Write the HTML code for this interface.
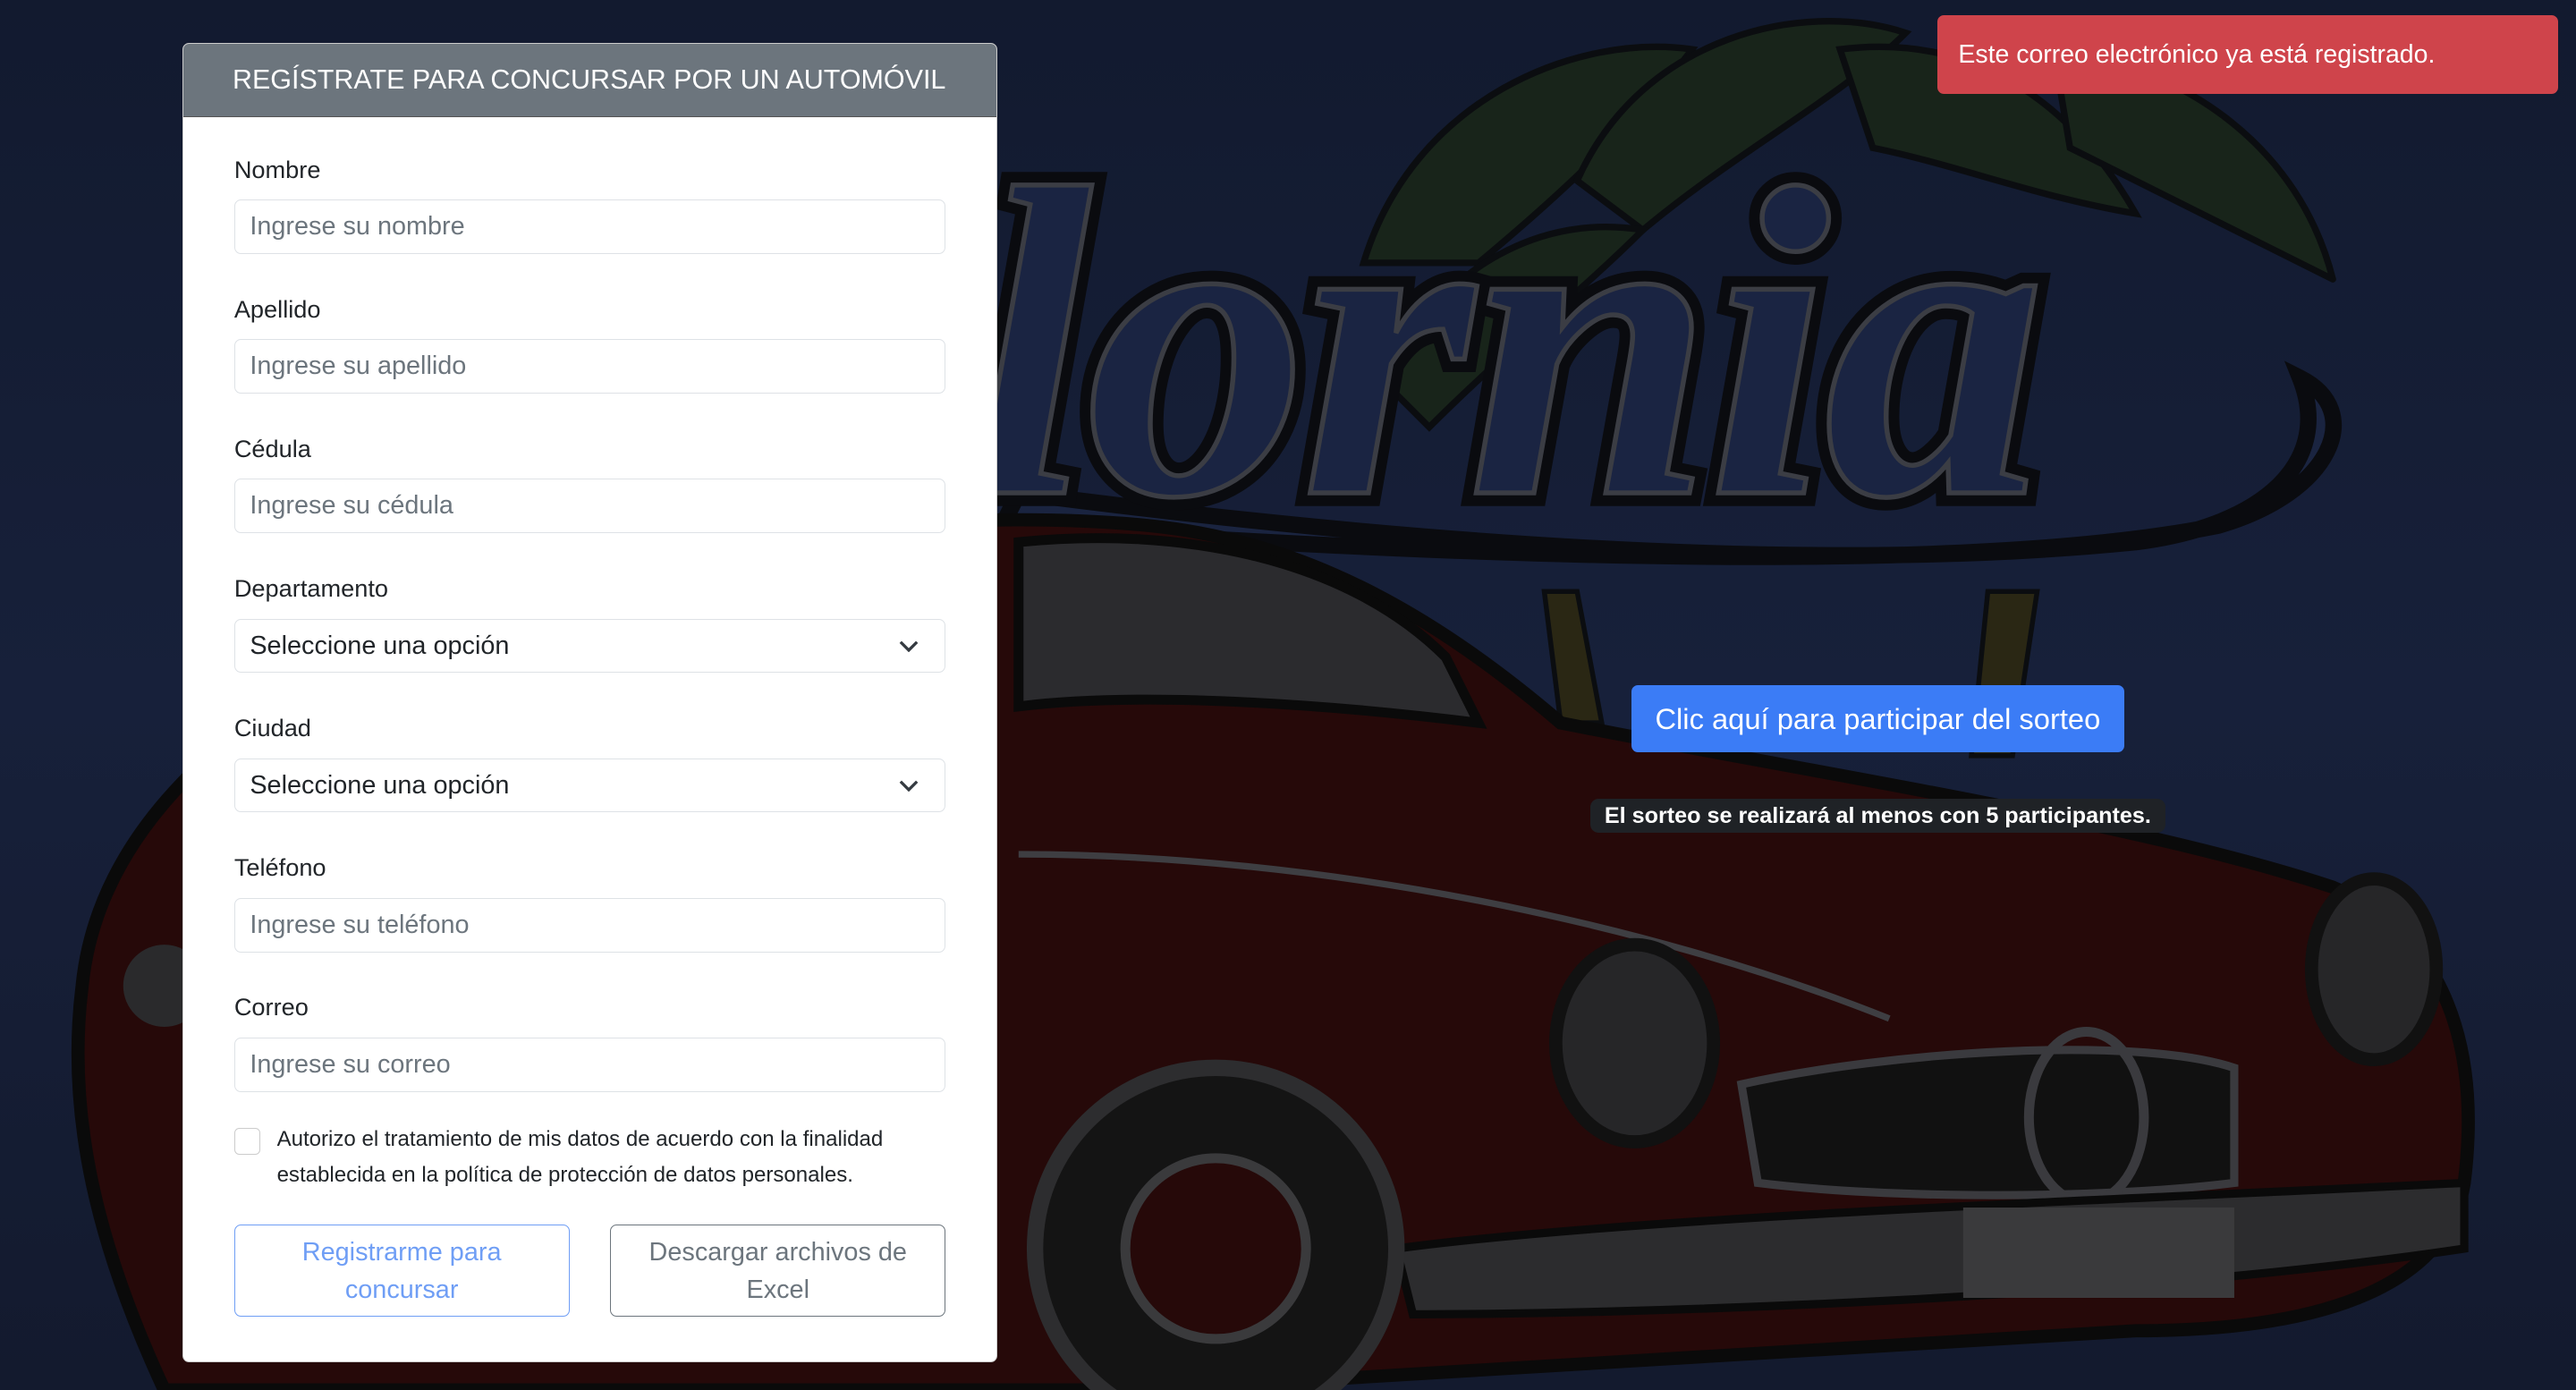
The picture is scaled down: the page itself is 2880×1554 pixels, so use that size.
<!DOCTYPE html>
<html><head><meta charset="utf-8">
<style>
html,body{margin:0;padding:0;}
body{width:2880px;height:1554px;overflow:hidden;background:#131a2c;font-family:"Liberation Sans",sans-serif;}
#w{position:absolute;left:0;top:0;width:1568px;height:846px;zoom:1.83673;overflow:hidden;background:linear-gradient(180deg,#121a2f 0%,#17203a 50%,#131a2e 100%);}
.abs{position:absolute}
.card{left:111px;top:26px;width:495px;height:802px;background:#fff;border:1px solid #ccc;border-radius:4px;overflow:hidden}
.hd{height:44px;background:#6c757d;color:#fff;font-size:16.6px;line-height:44px;padding-left:30px;border-bottom:1px solid #555;white-space:nowrap}
.lb{position:absolute;left:31px;font-size:14.8px;color:#212529}
.in{position:absolute;left:31px;width:423px;height:32px;border:1px solid #dee2e6;border-radius:4px;font-size:15.7px;color:#6c757d;line-height:32px;padding-left:9px;box-sizing:content-box}
.sel{color:#212529}
.sel svg{position:absolute;right:16px;top:12px}
.cb{position:absolute;left:31px;top:660px;width:15px;height:15px;border:1px solid #ccc;border-radius:3px}
.ct{position:absolute;left:57px;top:656px;font-size:13.1px;line-height:22px;color:#212529;width:410px}
.bt{position:absolute;top:719px;height:56px;border-radius:4px;font-size:15.7px;line-height:23px;text-align:center;display:flex;align-items:center;justify-content:center;box-sizing:border-box}
</style></head><body>
<div id="w">
<svg class="abs" style="left:0;top:0" width="1568" height="846" viewBox="0 0 1568 846">
 <g fill="#18241a" stroke="#0b0d10" stroke-width="4">
  <path d="M830 160 C860 60 960 20 1030 30 C1000 70 960 110 900 160 Z"/>
  <path d="M960 110 C1000 20 1100 0 1160 20 C1120 60 1060 90 1000 140 Z"/>
  <path d="M1120 30 C1200 20 1260 60 1300 130 C1240 120 1190 100 1140 90 Z"/>
  <path d="M1250 30 C1330 40 1400 90 1420 170 C1360 140 1300 110 1260 90 Z"/>
  <path d="M840 230 C880 160 940 130 1000 140 C960 180 920 210 870 260 Z"/>
 </g>
 <g fill="#2a2714" stroke="#0b0d10" stroke-width="3">
  <path d="M940 360 L960 360 L975 440 L950 440 Z"/>
  <path d="M1210 360 L1240 360 L1225 460 L1200 460 Z"/>
 </g>
 <path d="M610 320 C900 340 1200 350 1350 320 C1420 300 1440 250 1400 230 C1420 280 1380 320 1300 330 C1100 350 850 330 620 300 Z" fill="#1a2440" stroke="#0a0b0f" stroke-width="10"/>
 <text x="590" y="300" font-family="Liberation Serif,serif" font-style="italic" font-weight="bold" font-size="270" fill="#1a2442" stroke="#0a0b0f" stroke-width="16" paint-order="stroke" letter-spacing="-4">lornia</text>
 <text x="590" y="300" font-family="Liberation Serif,serif" font-style="italic" font-weight="bold" font-size="270" fill="none" stroke="#3b3d44" stroke-width="3" letter-spacing="-4">lornia</text>
 <path d="M50 600 C60 500 150 420 300 360 C450 320 600 310 700 320 C800 330 880 380 950 440 C1100 470 1300 500 1420 540 C1490 570 1510 640 1500 720 C1490 780 1420 810 1300 810 L700 846 L100 846 C60 760 40 680 50 600 Z" fill="#260909" stroke="#0a0a0a" stroke-width="8"/>
 <path d="M620 330 C720 320 820 340 880 400 L900 440 C820 430 700 420 620 430 Z" fill="#2b2b2e" stroke="#0a0a0a" stroke-width="6"/>
 <path d="M620 520 C800 520 1000 560 1150 620" fill="none" stroke="#3e3e42" stroke-width="4"/>
 <ellipse cx="995" cy="635" rx="48" ry="60" fill="#262628" stroke="#111" stroke-width="8"/>
 <ellipse cx="1445" cy="590" rx="38" ry="55" fill="#262628" stroke="#111" stroke-width="8"/>
 <path d="M1060 660 C1150 640 1300 630 1360 650 L1360 720 C1280 730 1150 730 1070 720 Z" fill="#111" stroke="#3a3a3e" stroke-width="5"/>
 <ellipse cx="1270" cy="680" rx="35" ry="52" fill="none" stroke="#3a3a3e" stroke-width="6"/>
 <path d="M850 760 C1000 740 1300 730 1500 720 L1500 760 C1300 790 1000 800 860 800 Z" fill="#2c2c2e" stroke="#0a0a0a" stroke-width="5"/>
 <rect x="1195" y="735" width="165" height="55" fill="#3a3a3c"/>
 <circle cx="740" cy="760" r="110" fill="#141414" stroke="#2d2d2f" stroke-width="10"/>
 <circle cx="740" cy="760" r="55" fill="#260909" stroke="#3a3a3c" stroke-width="6"/>
 <circle cx="100" cy="600" r="25" fill="#2a2a2c"/>
</svg>

<div class="abs card">
 <div class="hd">REGÍSTRATE PARA CONCURSAR POR UN AUTOMÓVIL</div>
 <div class="lb" style="top:68px">Nombre</div>
 <div class="in" style="top:95px">Ingrese su nombre</div>
 <div class="lb" style="top:153px">Apellido</div>
 <div class="in" style="top:180px">Ingrese su apellido</div>
 <div class="lb" style="top:238px">Cédula</div>
 <div class="in" style="top:265px">Ingrese su cédula</div>
 <div class="lb" style="top:323px">Departamento</div>
 <div class="in sel" style="top:350px">Seleccione una opción<svg width="12" height="8" viewBox="0 0 12 8"><path d="M1 1.5 L6 6.5 L11 1.5" fill="none" stroke="#343a40" stroke-width="1.8"/></svg></div>
 <div class="lb" style="top:408px">Ciudad</div>
 <div class="in sel" style="top:435px">Seleccione una opción<svg width="12" height="8" viewBox="0 0 12 8"><path d="M1 1.5 L6 6.5 L11 1.5" fill="none" stroke="#343a40" stroke-width="1.8"/></svg></div>
 <div class="lb" style="top:493px">Teléfono</div>
 <div class="in" style="top:520px">Ingrese su teléfono</div>
 <div class="lb" style="top:578px">Correo</div>
 <div class="in" style="top:605px">Ingrese su correo</div>
 <div class="cb"></div>
 <div class="ct">Autorizo el tratamiento de mis datos de acuerdo con la finalidad establecida en la política de protección de datos personales.</div>
 <div class="bt" style="left:31px;width:204px;border:1px solid #6f9ef5;color:#6f9ef5">Registrarme para<br>concursar</div>
 <div class="bt" style="left:260px;width:204px;border:1px solid #6c757d;color:#6c757d">Descargar archivos de<br>Excel</div>
</div>

<div class="abs" style="left:1179px;top:9px;width:378px;height:48px;background:#cf444b;border-radius:4px;color:#fff;font-size:15.5px;line-height:48px;padding-left:13px;box-sizing:border-box">Este correo electrónico ya está registrado.</div>

<div class="abs" style="left:993px;top:417px;width:300px;height:41px;background:#3b7cf6;border-radius:4px;color:#fff;font-size:17.8px;line-height:41px;text-align:center">Clic aquí para participar del sorteo</div>

<div class="abs" style="left:968px;top:486px;width:350px;height:21px;background:#1f2226;border-radius:5px;color:#fff;font-size:13.7px;font-weight:bold;line-height:21px;text-align:center;white-space:nowrap">El sorteo se realizará al menos con 5 participantes.</div>
</div>
</body></html>
